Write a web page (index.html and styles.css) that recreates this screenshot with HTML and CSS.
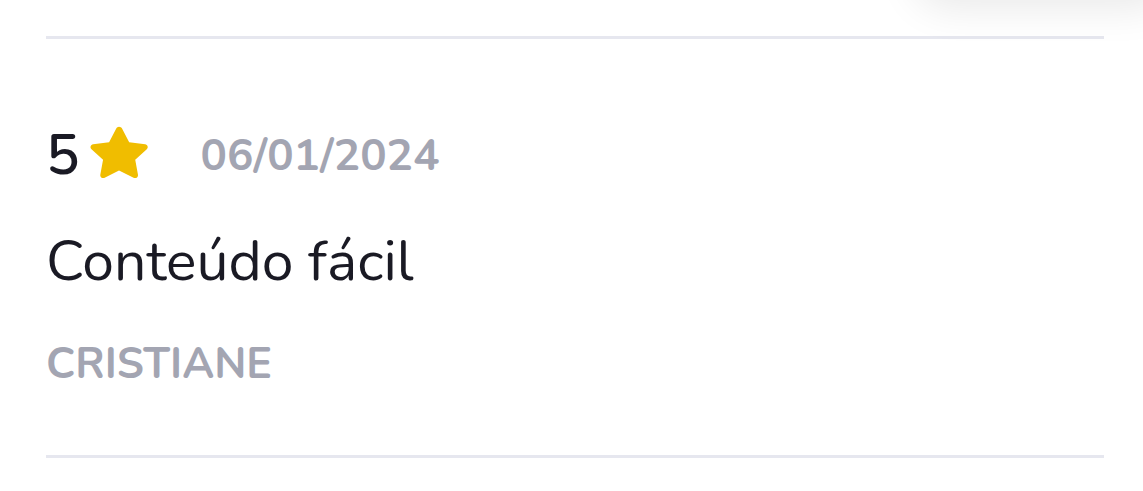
FILE: index.html
```html
<!DOCTYPE html>
<html lang="pt-br">
<head>
    <meta charset="UTF-8">
    <meta name="viewport" content="width=device-width, initial-scale=1.0">
    <title>Avaliações</title>
    <link rel="stylesheet" href="styles.css">
</head>
<body>
    <div class="flutuante"></div>
    <div class="lista">
        <div class="avaliacao">
            <div class="topo">
                <span class="nota">5</span>
                <svg class="estrela" viewBox="0 0 24 24" width="66" height="62" preserveAspectRatio="none">
                    <path d="M12 1.8c.5 0 .9.3 1.1.7l2.6 5.3 5.8.8c.9.1 1.3 1.3.6 1.9l-4.2 4.1 1 5.8c.2.9-.8 1.6-1.6 1.2L12 18.8l-5.2 2.8c-.8.4-1.8-.3-1.6-1.2l1-5.8-4.2-4.1c-.7-.6-.3-1.8.6-1.9l5.8-.8 2.6-5.3c.2-.4.6-.7 1-.7z" fill="#f0bd00"/>
                </svg>
                <span class="data">06/01/2024</span>
            </div>
            <p class="comentario">Conteúdo fácil</p>
            <p class="autor">CRISTIANE</p>
        </div>
    </div>
</body>
</html>
```

FILE: styles.css
```css
body {
    margin: 0;
    background: #fff;
    font-family: 'Nunito', 'Lato', sans-serif;
    overflow: hidden;
}
.flutuante {
    position: absolute;
    top: -70px;
    right: -30px;
    width: 260px;
    height: 70px;
    border-radius: 35px;
    box-shadow: 0 8px 40px rgba(0, 0, 0, 0.09);
}
.lista {
    margin: 36px 39px 0 46px;
}
.avaliacao {
    border-top: 3px solid #e6e7ef;
    border-bottom: 3px solid #e6e7ef;
    padding: 89px 0 69px 0;
}
.topo {
    display: flex;
    align-items: center;
    height: 56px;
}
.nota {
    font-size: 56px;
    line-height: 1;
    font-weight: 600;
    color: #1a1a24;
    margin-right: 6px;
}
.estrela {
    margin: 0 49px 6px 0;
}
.data {
    font-size: 44px;
    line-height: 1;
    font-weight: 700;
    color: #a3a5b2;
}
.comentario {
    margin: 49px 0 0;
    font-size: 57px;
    color: #1a1a24;
    line-height: 1;
}
.autor {
    margin: 53px 0 0;
    font-size: 43px;
    font-weight: 700;
    color: #a3a5b2;
    line-height: 1;
}
```
